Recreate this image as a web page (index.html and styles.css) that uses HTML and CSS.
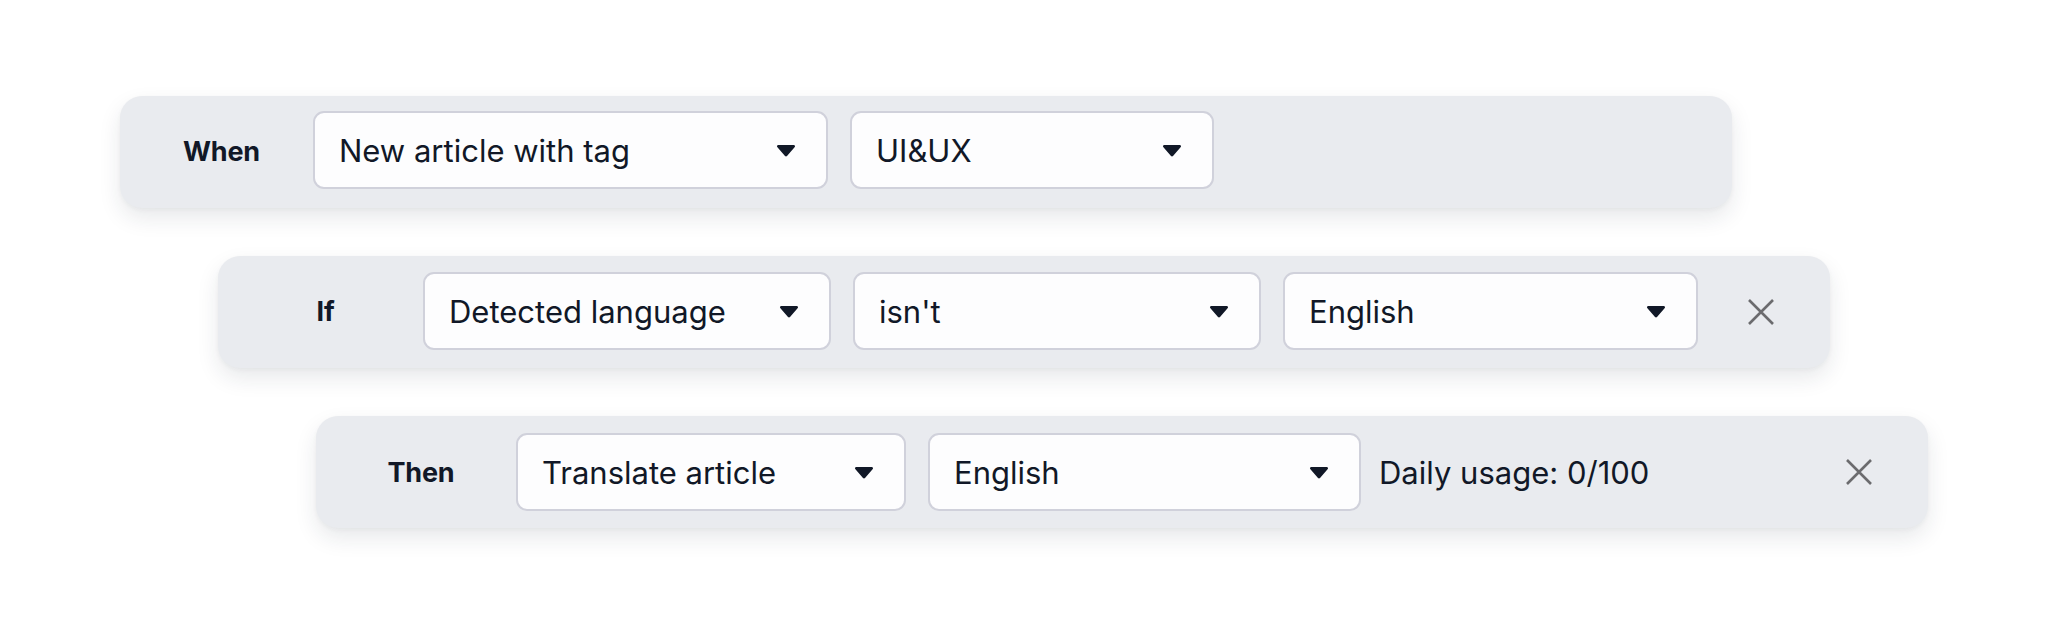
FILE: index.html
```html
<!DOCTYPE html>
<html lang="en">
<head>
<meta charset="utf-8">
<link rel="stylesheet" href="styles.css">
<title>Automation rule</title>
</head>
<body>
<main class="rules">
  <section class="card card--when">
    <div class="label label--when">When</div>
    <div class="select w-515"><span>New article with tag</span><svg class="caret" viewBox="0 0 20 13"><path d="M2.2 1h15.6c1 0 1.6 1.1 1 1.9l-7.8 9.2c-.5.6-1.5.6-2 0L1.2 2.9C.6 2.1 1.2 1 2.2 1z"/></svg></div>
    <div class="select w-364"><span>UI&amp;UX</span><svg class="caret" viewBox="0 0 20 13"><path d="M2.2 1h15.6c1 0 1.6 1.1 1 1.9l-7.8 9.2c-.5.6-1.5.6-2 0L1.2 2.9C.6 2.1 1.2 1 2.2 1z"/></svg></div>
  </section>

  <section class="card card--if">
    <div class="label label--if">If</div>
    <div class="select w-408"><span>Detected language</span><svg class="caret" viewBox="0 0 20 13"><path d="M2.2 1h15.6c1 0 1.6 1.1 1 1.9l-7.8 9.2c-.5.6-1.5.6-2 0L1.2 2.9C.6 2.1 1.2 1 2.2 1z"/></svg></div>
    <div class="select w-408"><span>isn't</span><svg class="caret" viewBox="0 0 20 13"><path d="M2.2 1h15.6c1 0 1.6 1.1 1 1.9l-7.8 9.2c-.5.6-1.5.6-2 0L1.2 2.9C.6 2.1 1.2 1 2.2 1z"/></svg></div>
    <div class="select w-415"><span>English</span><svg class="caret" viewBox="0 0 20 13"><path d="M2.2 1h15.6c1 0 1.6 1.1 1 1.9l-7.8 9.2c-.5.6-1.5.6-2 0L1.2 2.9C.6 2.1 1.2 1 2.2 1z"/></svg></div>
    <button class="close" aria-label="Remove"><svg viewBox="0 0 28 28"><path d="M2 2L26 26M26 2L2 26"/></svg></button>
  </section>

  <section class="card card--then">
    <div class="label label--then">Then</div>
    <div class="select w-390"><span>Translate article</span><svg class="caret" viewBox="0 0 20 13"><path d="M2.2 1h15.6c1 0 1.6 1.1 1 1.9l-7.8 9.2c-.5.6-1.5.6-2 0L1.2 2.9C.6 2.1 1.2 1 2.2 1z"/></svg></div>
    <div class="select w-433"><span>English</span><svg class="caret" viewBox="0 0 20 13"><path d="M2.2 1h15.6c1 0 1.6 1.1 1 1.9l-7.8 9.2c-.5.6-1.5.6-2 0L1.2 2.9C.6 2.1 1.2 1 2.2 1z"/></svg></div>
    <div class="usage">Daily usage: 0/100</div>
    <button class="close" aria-label="Remove"><svg viewBox="0 0 28 28"><path d="M2 2L26 26M26 2L2 26"/></svg></button>
  </section>
</main>
</body>
</html>
```

FILE: styles.css
```css
* { box-sizing: border-box; }

html, body {
  margin: 0;
  background: #ffffff;
}

body {
  font-family: Inter, "Noto Sans", "Liberation Sans", sans-serif;
  color: #111827;
  width: 2048px;
  height: 624px;
  overflow: hidden;
}

.rules {
  display: flex;
  flex-direction: column;
  gap: 48px;
  padding-top: 96px;
}

.card {
  width: 1612px;
  height: 112px;
  display: flex;
  align-items: center;
  gap: 22px;
  padding: 0 55px 0 40px;
  background: #e9ebef;
  border-radius: 22px;
  box-shadow: 0 10px 22px rgba(30, 40, 60, 0.10), 0 2px 4px rgba(30, 40, 60, 0.04);
}

.card--when { margin-left: 120px; }
.card--if { margin-left: 218px; }
.card--then { margin-left: 316px; }

.card--when .select { margin-top: -4px; }
.card--if .select { margin-top: -2px; }

.label {
  flex: none;
  text-align: center;
  font-weight: 700;
  font-size: 27px;
  letter-spacing: -0.2px;
  margin-right: 8px;
}

.label--when { width: 123px; margin-top: -2px; }
.label--if { width: 135px; margin-top: -2px; }
.label--then { width: 130px; }

.select {
  flex: none;
  height: 78px;
  display: flex;
  align-items: center;
  justify-content: space-between;
  padding: 0 30px 0 24px;
  background: #fdfdfe;
  border: 2px solid #d0d1db;
  border-radius: 11px;
  font-size: 31px;
  color: #111827;
}

.w-515 { width: 515px; }
.w-364 { width: 364px; }
.w-408 { width: 408px; }
.w-415 { width: 415px; }
.w-390 { width: 390px; }
.w-433 { width: 433px; }

.caret {
  width: 20px;
  height: 13px;
  fill: #111827;
  flex: none;
}

.usage {
  flex: none;
  font-size: 31px;
  color: #111827;
  margin-left: -4px;
}

.close {
  margin-left: auto;
  width: 28px;
  height: 28px;
  padding: 0;
  border: 0;
  background: transparent;
  display: flex;
}

.close svg {
  width: 28px;
  height: 28px;
  stroke: #6b6b6e;
  stroke-width: 2.6;
  fill: none;
}
```
